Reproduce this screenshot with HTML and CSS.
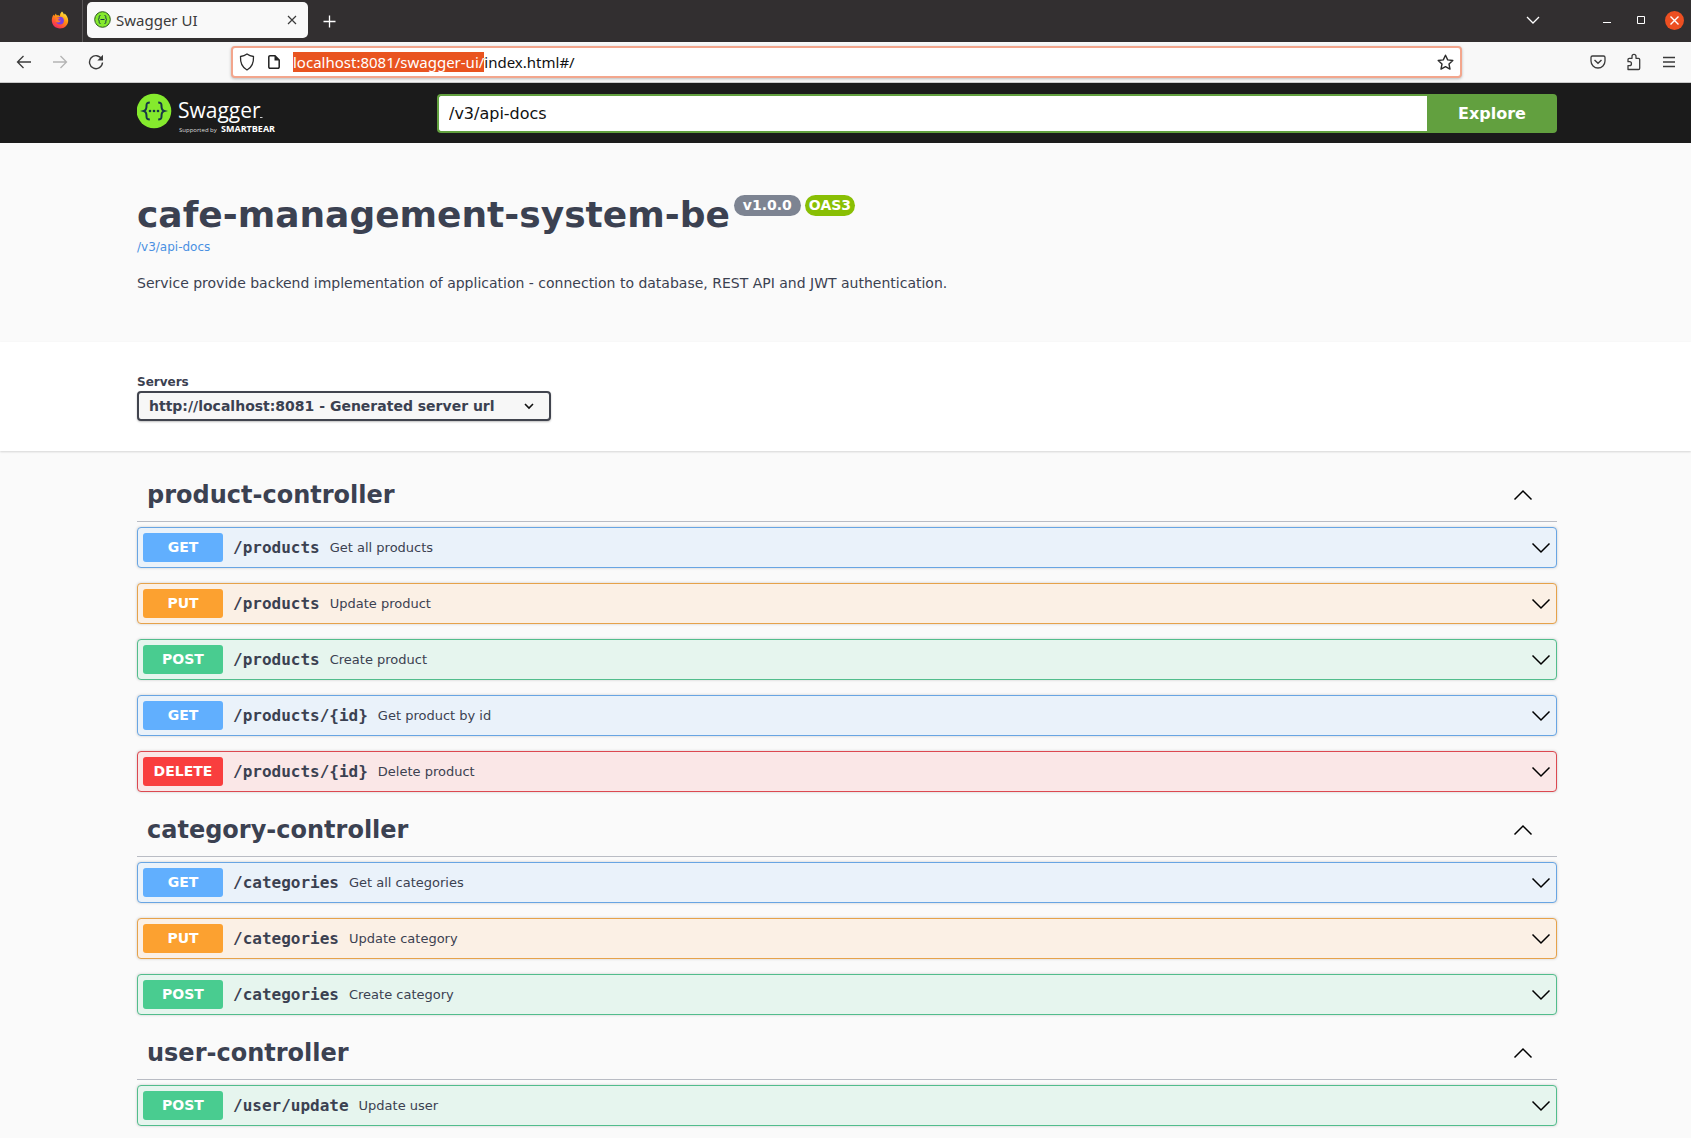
FILE: index.html
```html
<!DOCTYPE html>
<html lang="en">
<head>
<meta charset="utf-8">
<title>Swagger UI</title>
<link rel="stylesheet" href="styles.css">
</head>
<body>
<svg width="0" height="0" class="sprite" aria-hidden="true">
  <symbol id="chevron-down" viewBox="0 0 20 20"><path d="M1.5 5.5 10 14l8.500-8.500" fill="none" stroke="currentColor" stroke-width="1.500"/></symbol>
  <symbol id="chevron-up" viewBox="0 0 20 20"><path d="M1.500 14.500 10 6l8.500 8.500" fill="none" stroke="currentColor" stroke-width="1.500"/></symbol>
</svg>

<div class="browser">
  <div class="tabstrip">
    <div class="pinned">
      <svg width="18" height="18" viewBox="0 0 18 18" role="img" aria-label="Firefox">
        <defs>
          <linearGradient id="fox" x1="0.800" y1="0" x2="0.200" y2="1"><stop offset="0" stop-color="#fff04a"/><stop offset="0.400" stop-color="#ff980e"/><stop offset="0.750" stop-color="#ff4a3c"/><stop offset="1" stop-color="#e2206f"/></linearGradient>
        </defs>
        <path d="M11 .6c1 .8 1.700 1.900 1.900 3 .5-.2.600-.7.600-1.200 2 1.400 3.700 4.300 3.700 7.200 0 4.500-3.600 8-8.200 8S.8 14 .8 9.600C.8 7.300 1.500 5 2.600 3.600c.1.600.3 1.100.6 1.500.4-1.200 1-2 1.800-2.700 0 .8.300 1.500.8 1.900 1.600-.2 2.600.2 3.200 1C8.800 3.500 9.700 1.700 11 .6z" fill="url(#fox)"/>
        <circle cx="9" cy="9.600" r="3.900" fill="#7a3fe0"/>
        <path d="M5 7c1.600-1 3.500-.6 4.300.5-1.200 0-2 .4-2 1.200 0 .9 1.200 1.300 2.500.9-.5 2-3.500 2.700-5.200.8z" fill="#ff7a2a"/>
      </svg>
    </div>
    <div class="tab">
      <svg width="17" height="17" viewBox="0 0 17 17" aria-hidden="true">
        <circle cx="8.500" cy="8.500" r="7.800" fill="#85ea2d" stroke="#2c5a1e"/>
        <path d="M6.500 4.500c-1.300 0-1.300.5-1.300 1.700S5 8 4 8.500c1 .5 1.200 1.100 1.200 2.300s0 1.700 1.300 1.700M10.500 4.500c1.300 0 1.300.5 1.300 1.700S12 8 13 8.500c-1 .5-1.200 1.100-1.200 2.300s0 1.700-1.300 1.700M6.500 8.500h4" fill="none" stroke="#173647"/>
      </svg>
      <span class="tab-title">Swagger UI</span>
      <button class="icon" aria-label="Close tab"><svg width="10" height="10" viewBox="0 0 10 10"><path d="M1 1l8 8M9 1l-8 8" stroke="#3b3b3b" stroke-width="1.200"/></svg></button>
    </div>
    <button class="icon newtab" aria-label="New tab"><svg width="13" height="13" viewBox="0 0 13 13"><path d="M6.500 .5v12M.5 6.500h12" stroke="#fff" stroke-width="1.300"/></svg></button>
    <div class="window-controls">
      <button class="icon list-tabs" aria-label="List all tabs"><svg width="14" height="8" viewBox="0 0 14 8"><path d="M1 1l6 6 6-6" fill="none" stroke="#fff" stroke-width="1.300"/></svg></button>
      <button class="icon" aria-label="Minimize"><svg width="10" height="10" viewBox="0 0 10 10"><path d="M1 7.500h8" stroke="#fff"/></svg></button>
      <button class="icon" aria-label="Maximize"><svg width="10" height="10" viewBox="0 0 10 10"><path d="M1.500 1.500h7v7h-7z" fill="none" stroke="#fff"/></svg></button>
      <button class="icon" aria-label="Close window"><svg width="19" height="19" viewBox="0 0 19 19"><circle cx="9.500" cy="9.500" r="9.500" fill="#ed4f21"/><path d="M5.500 5.500l8 8M13.500 5.500l-8 8" stroke="#fff" stroke-width="1.400"/></svg></button>
    </div>
  </div>

  <div class="toolbar">
    <div class="nav-buttons">
      <button class="icon" aria-label="Back"><svg width="16" height="16" viewBox="0 0 16 16"><path d="M15 8H1.500M7.500 2l-6 6 6 6" fill="none" stroke="#3b3b3b" stroke-width="1.300"/></svg></button>
      <button class="icon" aria-label="Forward" disabled><svg width="16" height="16" viewBox="0 0 16 16"><path d="M1 8h13.500M8.500 2l6 6-6 6" fill="none" stroke="#b4b4b4" stroke-width="1.300"/></svg></button>
      <button class="icon" aria-label="Reload"><svg width="16" height="16" viewBox="0 0 16 16"><path d="M13.700 5A6.500 6.500 0 1 0 14.500 8.500" fill="none" stroke="#3b3b3b" stroke-width="1.400"/><path d="M15 .8v5.700H9.300z" fill="#3b3b3b"/></svg></button>
    </div>
    <div class="urlbar">
      <svg width="16" height="18" viewBox="0 0 16 18" aria-hidden="true"><path d="M8 1C6 2.500 4 3.200 1.500 3.500c-.3 6 .8 10.500 6.500 13.500 5.700-3 6.800-7.500 6.500-13.500C12 3.200 10 2.500 8 1z" fill="none" stroke="#2c2c2c" stroke-width="1.300" stroke-linejoin="round"/></svg>
      <svg width="12" height="14" viewBox="0 0 12 14" aria-hidden="true"><path d="M2 .8h5l4.200 4.200V12a1.200 1.200 0 0 1-1.200 1.200H2A1.200 1.200 0 0 1 .8 12V2A1.200 1.200 0 0 1 2 .8z" fill="none" stroke="#222" stroke-width="1.500"/><path d="M6.500 .8v4.700h4.700z" fill="#222"/></svg>
      <input class="url" type="text" aria-label="Address" value="localhost:8081/swagger-ui/index.html#/" spellcheck="false">
      <button class="icon" aria-label="Bookmark this page"><svg width="17" height="17" viewBox="0 0 17 17"><path d="M8.500 1.200l2.200 4.700 5.100.6-3.800 3.500 1 5.100-4.500-2.500L4 15.100l1-5.100L1.200 6.500l5.100-.6z" fill="none" stroke="#2c2c2c" stroke-width="1.400" stroke-linejoin="round"/></svg></button>
    </div>
    <div class="tool-buttons">
      <button class="icon" aria-label="Save to Pocket"><svg width="16" height="16" viewBox="0 0 16 16"><path d="M2.500 2h11a1.500 1.500 0 0 1 1.500 1.500V7A7 7 0 0 1 1 7V3.500A1.500 1.500 0 0 1 2.500 2z" fill="none" stroke="#3b3b3b" stroke-width="1.300"/><path d="M4.500 6L8 9.300 11.500 6" fill="none" stroke="#3b3b3b" stroke-width="1.400"/></svg></button>
      <button class="icon" aria-label="Extensions"><svg width="16" height="18" viewBox="0 0 16 18"><path d="M2 16.500h10.500a1.200 1.200 0 0 0 1.200-1.200V6.500a1.200 1.200 0 0 0-1.200-1.200H10V3.400a2 2 0 0 0-4 0v1.900H3.200A1.200 1.200 0 0 0 2 6.500v2.200h1.500a1.900 1.900 0 0 1 0 3.900H2z" fill="none" stroke="#3b3b3b" stroke-width="1.300" stroke-linejoin="round"/></svg></button>
      <button class="icon" aria-label="Menu"><svg width="14" height="16" viewBox="0 0 14 16"><path d="M1 3.500h12M1 8h12M1 12.500h12" stroke="#3b3b3b" stroke-width="1.400"/></svg></button>
    </div>
  </div>
</div>

<header class="topbar">
  <form class="wrapper topbar-inner" onsubmit="return false">
    <a class="logo" href="#" aria-label="Swagger, supported by SmartBear">
      <svg width="148" height="46" viewBox="0 0 148 46">
        <circle cx="17" cy="19" r="17.300" fill="#85ea2d"/>
        <path d="M12.800 10.500c-2.800 0-3.300.8-3.300 3 0 2.800.2 4.700-2.700 5.500 2.900.8 2.700 2.700 2.700 5.500 0 2.200.5 3 3.300 3M21.200 10.500c2.800 0 3.300.8 3.300 3 0 2.800-.2 4.700 2.700 5.500-2.900.8-2.700 2.700-2.700 5.500 0 2.200-.5 3-3.300 3" fill="none" stroke="#173647" stroke-width="2"/>
        <g fill="#173647"><circle cx="13" cy="19" r="1.300"/><circle cx="17" cy="19" r="1.300"/><circle cx="21" cy="19" r="1.300"/></g>
        <text class="logo-name" x="41" y="26">Swagger</text>
        <path d="M123 25.500h2.500" stroke="#ccc"/>
        <text class="logo-by" x="42" y="40">Supported by</text>
        <text class="logo-brand" x="84" y="40">SMARTBEAR</text>
      </svg>
    </a>
    <input class="spec-url" type="text" aria-label="Definition URL" value="/v3/api-docs">
    <button class="explore" type="submit">Explore</button>
  </form>
</header>

<main>
  <section class="wrapper info">
    <div class="title-row">
      <h1>cafe-management-system-be</h1>
      <span class="badge">v1.0.0</span>
      <span class="badge oas">OAS3</span>
    </div>
    <a class="spec-link" href="/v3/api-docs">/v3/api-docs</a>
    <p>Service provide backend implementation of application - connection to database, REST API and JWT authentication.</p>
  </section>

  <section class="schemes">
    <div class="wrapper">
      <label for="servers">Servers</label>
      <div class="select">
        <select id="servers"><option>http://localhost:8081 - Generated server url</option></select>
        <svg width="10" height="10" viewBox="0 0 10 10" aria-hidden="true"><path d="M1 3l4 4 4-4" fill="none" stroke="#111" stroke-width="1.600"/></svg>
      </div>
    </div>
  </section>

  <div class="wrapper operations">
    <section class="tag">
      <h2>product-controller<button class="icon" aria-label="Collapse product-controller"><svg width="20" height="20"><use href="#chevron-up"/></svg></button></h2>
      <button class="op get"><span class="method">GET</span><span class="path">/products</span><span class="summary">Get all products</span><svg width="20" height="20"><use href="#chevron-down"/></svg></button>
      <button class="op put"><span class="method">PUT</span><span class="path">/products</span><span class="summary">Update product</span><svg width="20" height="20"><use href="#chevron-down"/></svg></button>
      <button class="op post"><span class="method">POST</span><span class="path">/products</span><span class="summary">Create product</span><svg width="20" height="20"><use href="#chevron-down"/></svg></button>
      <button class="op get"><span class="method">GET</span><span class="path">/products/{id}</span><span class="summary">Get product by id</span><svg width="20" height="20"><use href="#chevron-down"/></svg></button>
      <button class="op delete"><span class="method">DELETE</span><span class="path">/products/{id}</span><span class="summary">Delete product</span><svg width="20" height="20"><use href="#chevron-down"/></svg></button>
    </section>
    <section class="tag">
      <h2>category-controller<button class="icon" aria-label="Collapse category-controller"><svg width="20" height="20"><use href="#chevron-up"/></svg></button></h2>
      <button class="op get"><span class="method">GET</span><span class="path">/categories</span><span class="summary">Get all categories</span><svg width="20" height="20"><use href="#chevron-down"/></svg></button>
      <button class="op put"><span class="method">PUT</span><span class="path">/categories</span><span class="summary">Update category</span><svg width="20" height="20"><use href="#chevron-down"/></svg></button>
      <button class="op post"><span class="method">POST</span><span class="path">/categories</span><span class="summary">Create category</span><svg width="20" height="20"><use href="#chevron-down"/></svg></button>
    </section>
    <section class="tag">
      <h2>user-controller<button class="icon" aria-label="Collapse user-controller"><svg width="20" height="20"><use href="#chevron-up"/></svg></button></h2>
      <button class="op post"><span class="method">POST</span><span class="path">/user/update</span><span class="summary">Update user</span><svg width="20" height="20"><use href="#chevron-down"/></svg></button>
    </section>
  </div>
</main>
<script src="script.js"></script>
</body>
</html>
```
FILE: styles.css
```css
* { box-sizing: border-box; }

body {
  margin: 0;
  background: #fafafa;
  color: #3b4151;
  font-family: "DejaVu Sans", sans-serif;
}

button, input, select { font: inherit; color: inherit; }
svg { display: block; flex: none; }
.sprite { position: absolute; }

.icon {
  display: flex;
  padding: 0;
  border: 0;
  background: none;
}

/* Browser window */
.browser { font-family: "Noto Sans", sans-serif; font-size: 15px; }

.tabstrip {
  display: flex;
  align-items: center;
  height: 42px;
  background: #322f30;
}
.pinned {
  display: flex;
  align-items: center;
  justify-content: flex-end;
  width: 83px;
  height: 42px;
  padding: 0 13px 3px 0;
  border-right: 1px solid #5a5758;
}
.tab {
  display: flex;
  align-items: center;
  gap: 5px;
  width: 221px;
  height: 36px;
  margin: 0 15px 3px 4px;
  padding: 0 11px 0 7px;
  border-radius: 5px;
  background: #f9f9f9;
  color: #3b3b3b;
}
.tab-title { flex: 1; line-height: 20px; }
.window-controls {
  display: flex;
  align-items: center;
  gap: 24px;
  margin-left: auto;
  padding: 0 7px 2px 0;
}
.list-tabs { margin-right: 38px; }
.window-controls .icon:last-child { margin-left: -5px; }

.toolbar {
  display: flex;
  align-items: center;
  height: 41px;
  border-bottom: 1px solid #c9c9c9;
  background: #f8f8f8;
}
.nav-buttons { display: flex; gap: 20px; width: 231px; padding-left: 16px; }
.urlbar {
  display: flex;
  flex: 1;
  align-items: center;
  gap: 13px;
  height: 32px;
  padding: 0 6px;
  border: 2px solid #f3a68d;
  border-radius: 4px;
  background: #fff;
  box-shadow: 0 1px 3px rgba(0, 0, 0, .25);
}
.url {
  flex: 1;
  min-width: 0;
  height: 20px;
  padding: 0;
  border: 0;
  outline: 0;
  background: none;
  color: #111;
}
.url::selection { background: #e95420; color: #fff; }
.tool-buttons {
  display: flex;
  align-items: center;
  justify-content: flex-end;
  gap: 20px;
  width: 229px;
  padding-right: 15px;
}

/* Swagger page */
.wrapper {
  max-width: 1463px;
  margin: 0 auto;
  padding: 0 20px 0 23px;
}

.topbar { background: #1b1b1b; }
.topbar-inner { display: flex; align-items: center; height: 60px; padding-top: 1px; }
.logo { width: 300px; padding-top: 2px; }
.logo-name { fill: #fff; font: 21px "Open Sans", sans-serif; }
.logo-by { fill: #ddd; font: 6px "Open Sans", sans-serif; }
.logo-brand { fill: #fff; font: bold 9px "Open Sans", sans-serif; }
.spec-url {
  flex: 1;
  min-width: 0;
  height: 39px;
  padding: 0 10px;
  border: 2px solid #62a03f;
  border-right: 0;
  border-radius: 4px 0 0 4px;
  background: #fff;
  color: #111;
  font-size: 16px;
}
.explore {
  width: 130px;
  height: 39px;
  padding: 0;
  border: 0;
  border-radius: 0 4px 4px 0;
  background: #62a03f;
  color: #fff;
  font-size: 16px;
  font-weight: bold;
}

.info { padding-top: 50px; padding-bottom: 49px; }
.title-row { display: flex; align-items: flex-start; gap: 4px; }
h1 { margin: 0; font-size: 36px; line-height: 44px; }
.badge {
  height: 21px;
  margin-top: 2px;
  padding: 0 9px;
  border-radius: 11px;
  background: #7d8492;
  color: #fff;
  font-size: 14px;
  font-weight: bold;
  line-height: 21px;
}
.oas { padding: 0 4px; background: #89bf04; }
.spec-link {
  display: block;
  width: max-content;
  color: #4990e2;
  font-size: 12px;
  line-height: 20px;
  text-decoration: none;
}
.info p { margin: 16px 0 0; font-size: 14px; line-height: 20px; }

.schemes {
  padding: 32px 0 30px;
  background: #fff;
  box-shadow: 0 1px 2px rgba(0, 0, 0, .15);
}
.schemes label { display: block; font-size: 12px; font-weight: bold; line-height: 17px; }
.select { display: grid; align-items: center; width: 414px; }
.select > * { grid-area: 1 / 1; }
.select svg { justify-self: end; margin-right: 17px; pointer-events: none; }
.select select {
  width: 100%;
  height: 30px;
  padding: 0 40px 0 10px;
  border: 2px solid #41444e;
  border-radius: 4px;
  background: #f7f7f7;
  box-shadow: 0 1px 2px rgba(0, 0, 0, .25);
  font-size: 14px;
  font-weight: bold;
  appearance: none;
}

.operations { padding-top: 21px; padding-bottom: 12px; }
.tag { display: flex; flex-direction: column; gap: 15px; }
.tag + .tag { margin-top: 15px; }
.tag h2 {
  display: flex;
  align-items: center;
  justify-content: space-between;
  height: 50px;
  margin: 0 0 -10px;
  padding: 0 24px 3px 10px;
  border-bottom: 1px solid #b9bcc4;
  font-size: 24px;
}
.tag h2 .icon { color: #000; }

.op {
  display: flex;
  align-items: center;
  width: 100%;
  padding: 5px;
  border: 1px solid;
  border-radius: 4px;
  box-shadow: 0 0 3px rgba(0, 0, 0, .19);
  color: #3b4151;
  text-align: left;
}
.op svg { color: #000; }
.method {
  width: 80px;
  margin-right: 10px;
  border-radius: 3px;
  color: #fff;
  font-size: 14px;
  font-weight: bold;
  line-height: 29px;
  text-align: center;
}
.path { font: bold 16px "DejaVu Sans Mono", monospace; }
.summary { flex: 1; padding: 0 10px; font-size: 13px; }

.get { border-color: #68a5e3; background: #eaf2fa; }
.get .method { background: #61affe; }
.put { border-color: #e6a24a; background: #fbf0e5; }
.put .method { background: #fca130; }
.post { border-color: #52bd8c; background: #e6f5ee; }
.post .method { background: #49cc90; }
.delete { border-color: #dc4850; background: #fae7e7; }
.delete .method { background: #f93e3e; }
```
FILE: script.js
```js
// Focus the address bar with the host and folder part selected.
const url = document.querySelector('.url');
url.focus();
url.setSelectionRange(0, url.value.lastIndexOf('index.html'));
```
